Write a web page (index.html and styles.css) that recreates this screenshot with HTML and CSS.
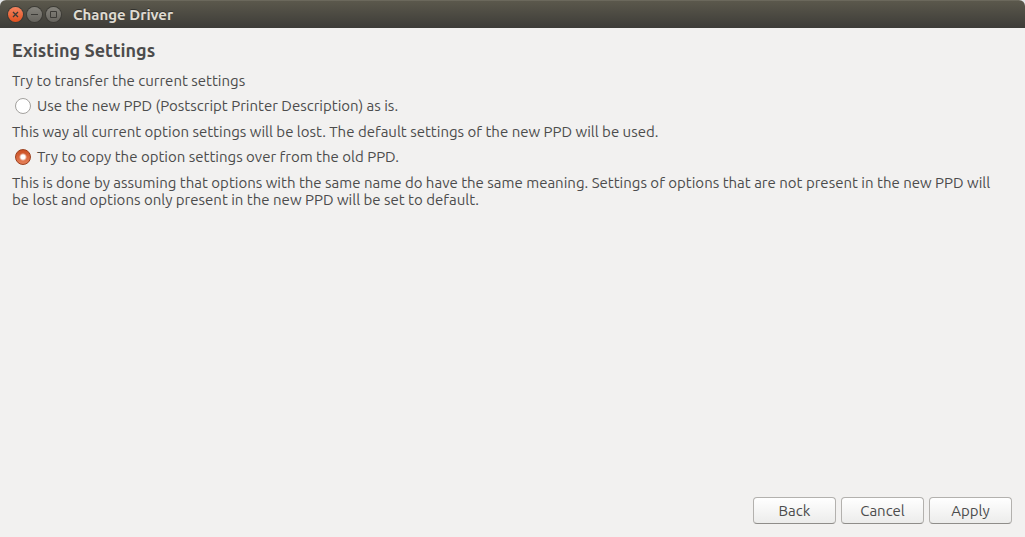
FILE: index.html
```html
<!DOCTYPE html>
<html lang="en">
<head>
<meta charset="utf-8">
<title>Change Driver</title>
<link rel="stylesheet" href="styles.css">
</head>
<body>
<div class="window">
  <header class="titlebar">
    <div class="controls">
      <button class="control control-close" type="button" aria-label="Close">
        <svg viewBox="0 0 15 15" aria-hidden="true"><path d="M5 5l5 5M10 5l-5 5"/></svg>
      </button>
      <button class="control" type="button" aria-label="Minimize">
        <svg viewBox="0 0 15 15" aria-hidden="true"><path d="M4 7.500h7"/></svg>
      </button>
      <button class="control" type="button" aria-label="Maximize">
        <svg viewBox="0 0 15 15" aria-hidden="true"><path d="M4.500 4.500h6v6h-6z"/></svg>
      </button>
    </div>
    <span class="title">Change Driver</span>
  </header>
  <main class="content">
    <h1 class="heading">Existing Settings</h1>
    <form class="options">
      <p class="text">Try to transfer the current settings</p>
      <div class="option">
        <input class="radio" type="radio" name="transfer" id="use-new">
        <label class="option-label" for="use-new">Use the new PPD (Postscript Printer Description) as is.</label>
      </div>
      <p class="text">This way all current option settings will be lost. The default settings of the new PPD will be used.</p>
      <div class="option">
        <input class="radio" type="radio" name="transfer" id="copy-old" checked>
        <label class="option-label" for="copy-old">Try to copy the option settings over from the old PPD.</label>
      </div>
      <p class="text">This is done by assuming that options with the same name do have the same meaning. Settings of options that are not present in the new PPD will be lost and options only present in the new PPD will be set to default.</p>
    </form>
  </main>
  <footer class="actions">
    <button class="button" type="button">Back</button>
    <button class="button" type="button">Cancel</button>
    <button class="button" type="button">Apply</button>
  </footer>
</div>
</body>
</html>
```
FILE: styles.css
```css
* {
  box-sizing: border-box;
}

body {
  margin: 0;
  background: #e4e6e8;
  color: #4c4c4c;
  font-family: Ubuntu, "Noto Sans", sans-serif;
  font-size: 15px;
  line-height: 17px;
}

.window {
  display: flex;
  flex-direction: column;
  min-height: 100vh;
  overflow: hidden;
  border-radius: 6px 6px 0 0;
  background: #f2f1f0;
}

.titlebar {
  display: flex;
  align-items: center;
  gap: 12px;
  height: 28px;
  padding: 0 8px;
  border-top: 1px solid #6b685c;
  background: linear-gradient(#5b584c, #3d3c38);
}

.controls {
  display: flex;
  gap: 4px;
}

.control {
  width: 15px;
  height: 15px;
  padding: 0;
  border: 0;
  border-radius: 50%;
  background: linear-gradient(#85837c, #66645e);
  box-shadow: 0 0 0 1px #3c3b36;
}

.control-close {
  background: linear-gradient(#f58460, #e2511f);
}

.control svg {
  display: block;
  fill: none;
  stroke: #3c3b37;
  stroke-width: 1;
}

.control-close svg {
  stroke-width: 1.300;
}

.title {
  color: #dfdbd2;
  font-weight: 700;
  text-shadow: 0 -1px 0 #33322e;
}

.content {
  flex: 1;
  padding: 12px 20px 12px 12px;
}

.heading {
  margin: 0 0 12px;
  font-size: 18px;
  line-height: 20px;
}

.options {
  display: flex;
  flex-direction: column;
  gap: 8px;
}

.text {
  margin: 0;
}

.option {
  display: flex;
  align-items: center;
  gap: 6px;
  min-height: 18px;
  padding-left: 3px;
}

.option-label {
  align-self: flex-start;
}

.radio {
  appearance: none;
  flex: none;
  width: 16px;
  height: 16px;
  margin: 0;
  border: 1px solid #a3a19e;
  border-radius: 50%;
  background: #fff;
}

.radio:checked {
  border-color: #9c3f1c;
  background: radial-gradient(circle, #fff 0 2px, transparent 4px), linear-gradient(#cb4f22, #e58059);
}

.actions {
  display: flex;
  justify-content: flex-end;
  gap: 5px;
  padding: 13px;
}

.button {
  width: 83px;
  height: 27px;
  padding: 0;
  border: 1px solid #b3b1ae;
  border-bottom-color: #8f8d8a;
  border-radius: 4px;
  background: linear-gradient(#fff, #ececeb);
  color: inherit;
  font: inherit;
}
```
